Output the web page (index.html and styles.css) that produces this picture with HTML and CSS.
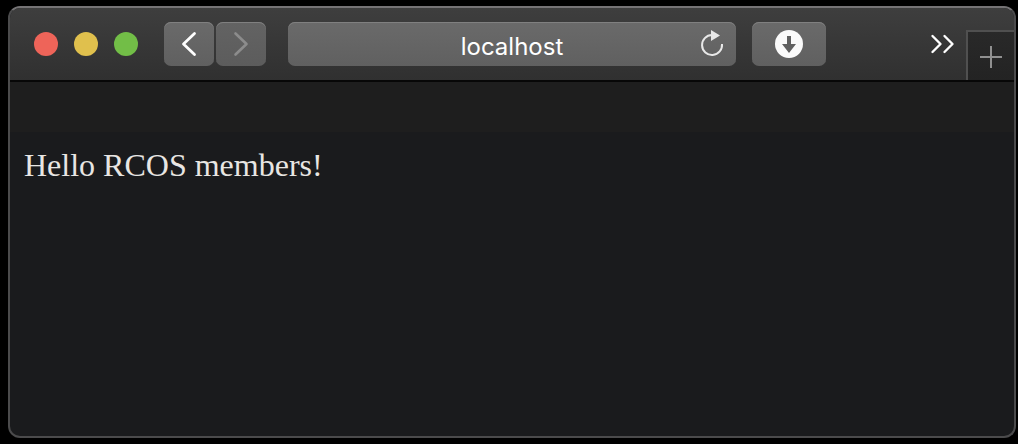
FILE: index.html
```html
<!DOCTYPE html>
<html lang="en">
<head>
<meta charset="utf-8">
<meta name="viewport" content="width=device-width, initial-scale=1">
<title>localhost</title>
<link rel="stylesheet" href="styles.css">
</head>
<body>
<div class="window">
  <header class="toolbar">
    <div class="lights">
      <button class="light close" type="button" aria-label="Close"></button>
      <button class="light minimize" type="button" aria-label="Minimize"></button>
      <button class="light expand" type="button" aria-label="Full screen"></button>
    </div>
    <nav class="history" aria-label="History">
      <button class="tool" type="button" aria-label="Back">
        <svg width="50" height="44" viewBox="0 0 50 44"><path d="M30.500 11.500 19.500 22l11 10.500" fill="none" stroke="#fff" stroke-width="2.800" stroke-linecap="round" stroke-linejoin="round"/></svg>
      </button>
      <button class="tool" type="button" aria-label="Forward" disabled>
        <svg width="50" height="44" viewBox="0 0 50 44"><path d="M19.500 11.500 30.500 22l-11 10.500" fill="none" stroke="#8c8c8c" stroke-width="2.600" stroke-linecap="round" stroke-linejoin="round"/></svg>
      </button>
    </nav>
    <form class="address">
      <input class="url" type="text" value="localhost" aria-label="Address" spellcheck="false">
      <button class="reload" type="button" aria-label="Reload">
        <svg width="48" height="44" viewBox="0 0 48 44"><path d="M24 13a10 10 0 1 0 10 9" fill="none" stroke="#e8e8e8" stroke-width="2"/><path d="M23 8 32 13.500l-9 5.500z" fill="#e8e8e8"/></svg>
      </button>
    </form>
    <button class="tool downloads" type="button" aria-label="Downloads">
      <svg width="74" height="44" viewBox="0 0 74 44"><circle cx="37" cy="22" r="14" fill="#fafafa"/><path d="M35 14h4v8h5l-7 9-7-9h5z" fill="#606060"/></svg>
    </button>
    <button class="more" type="button" aria-label="More toolbar items">
      <svg width="32" height="44" viewBox="0 0 32 44"><path d="M6.500 14 14.500 22l-8 8M18.500 14 26.500 22l-8 8" fill="none" stroke="#fff" stroke-width="2.400" stroke-linecap="round" stroke-linejoin="round"/></svg>
    </button>
    <button class="new-tab" type="button" aria-label="New tab">
      <svg width="46" height="48" viewBox="0 0 46 48"><path d="M12 25h22M23 14v22" fill="none" stroke="#909090" stroke-width="2"/></svg>
    </button>
  </header>
  <div class="favorites"></div>
  <main class="page">
    <p class="greeting">Hello RCOS members!</p>
  </main>
</div>
</body>
</html>
```
FILE: styles.css
```css
* {
  box-sizing: border-box;
}

body {
  margin: 0;
  padding: 6px 2px 6px 8px;
  min-height: 100vh;
  display: flex;
  background: #000;
}

button {
  display: block;
  padding: 0;
  border: 0;
  background: none;
}

svg {
  display: block;
}

.window {
  flex: 1;
  min-width: 0;
  display: flex;
  flex-direction: column;
  overflow: hidden;
  border: 2px solid #4b4b4c;
  border-top-color: #757375;
  border-radius: 12px;
  background: #1a1b1d;
}

.toolbar {
  height: 74px;
  display: flex;
  align-items: center;
  padding-left: 24px;
  border-bottom: 2px solid #070707;
  background: linear-gradient(#3e3e3e, #303030);
}

.lights {
  display: flex;
  gap: 16px;
  margin-right: 26px;
}

.light {
  width: 24px;
  height: 24px;
  border-radius: 50%;
}

.close {
  background: #ee6459;
}

.minimize {
  background: #e0c04d;
}

.expand {
  background: #72be47;
}

.history {
  display: flex;
  gap: 2px;
  margin-right: 22px;
}

.tool,
.url {
  height: 44px;
  border-radius: 7px;
  background: linear-gradient(#6a6a6a, #606060);
  box-shadow: inset 0 1px #808080;
}

.tool:disabled {
  background: linear-gradient(#636363, #5c5c5c);
}

.address {
  position: relative;
  flex: 1;
  min-width: 0;
  margin-right: 16px;
}

.url {
  display: block;
  width: 100%;
  padding: 4px 48px 0;
  border: 0;
  outline: 0;
  color: #fff;
  font: 24px Inter, "Liberation Sans", sans-serif;
  text-align: center;
}

.reload {
  position: absolute;
  top: 0;
  right: 0;
}

.more {
  margin-left: 100px;
  margin-right: 8px;
}

.new-tab {
  align-self: flex-end;
  border-top: 2px solid #505050;
  border-left: 2px solid #505050;
  background: linear-gradient(#292929, #232323);
}

.favorites {
  height: 50px;
  background: #1e1e1e;
}

.page {
  flex: 1;
  padding: 15px 14px;
}

.greeting {
  margin: 0;
  color: #e8e6e3;
  font: 32px/36px "Liberation Serif", "Times New Roman", serif;
}
```
